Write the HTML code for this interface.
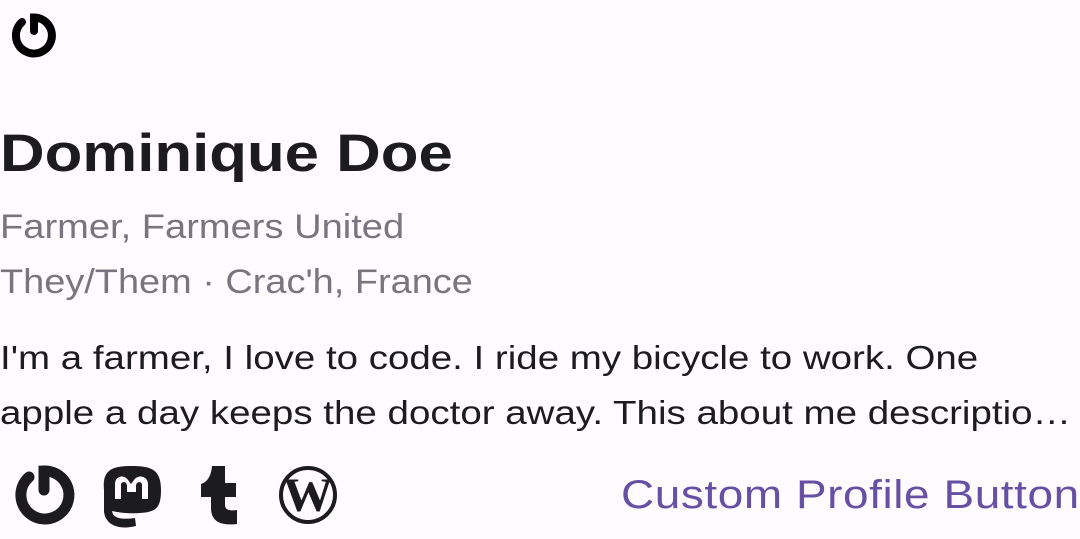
<!DOCTYPE html>
<html><head><style>
body{margin:0;width:1080px;height:539px;background:#fffbfe;font-family:"Liberation Sans",sans-serif;position:relative;overflow:hidden}
.t{position:absolute;white-space:nowrap;transform-origin:0 0}
</style></head><body>
<svg style="position:absolute;left:0;top:0" width="1080" height="539">
<g fill="none" stroke="#000" stroke-linecap="round" stroke-width="8">
<path d="M22 22 A18 18 0 1 0 34 17.5 L34 31"/>
</g>
<g fill="none" stroke="#1c1b1f" stroke-linecap="round" stroke-width="11">
<path d="M29 477 A24 24 0 1 0 44 471 L44 490"/>
</g>
<g fill="#1c1b1f">
<path d="M104 490 C102 470 112 466 132 466 C152 466 161 470 161 490 C161 508 156 512 140 513 C128 514 116 512 112 511 C113 518 120 520 135 518 L136 526 C120 530 106 526 104 512 Z"/>
<path d="M115 499 L115 484 C115 476 124 474 128 480 L131 484 L134 480 C138 474 148 476 148 484 L148 499 L142 499 L142 485 C142 481 136 481 136 486 L136 492 L127 492 L127 486 C127 481 121 481 121 485 L121 499 Z" fill="#fffbfe"/>
<path d="M212 466 L225 466 L225 483 L236 483 L236 497 L225 497 L225 505 C225 510 230 511 237 510 L237 524 C220 526 211 521 211 508 L211 497 L201 497 L201 484 C207 482 211 477 212 466 Z"/>
</g>
<circle cx="308" cy="495" r="27" fill="none" stroke="#1c1b1f" stroke-width="4"/>
<text x="308" y="511" text-anchor="middle" font-family="Liberation Serif" font-weight="bold" font-size="48" fill="#1c1b1f" transform="translate(308 0) scale(1.05 1) translate(-308 0)">W</text>
</svg>
<div class="t" style="left:0;top:123px;font-size:53px;font-weight:bold;color:#1c1b1f;transform:scaleX(1.165)">Dominique Doe</div>
<div class="t" style="left:0;top:208px;font-size:34px;color:#79747e;transform:scaleX(1.12)">Farmer, Farmers United</div>
<div class="t" style="left:0;top:263px;font-size:34px;color:#79747e;transform:scaleX(1.115)">They/Them · Crac'h, France</div>
<div class="t" style="left:0;top:339px;font-size:33px;color:#1c1b1f;transform:scaleX(1.166)">I'm a farmer, I love to code. I ride my bicycle to work. One</div>
<div class="t" style="left:0;top:394px;font-size:33px;color:#1c1b1f;transform:scaleX(1.167)">apple a day keeps the doctor away. This about me descriptio…</div>
<div class="t" style="left:621px;top:473px;font-size:40px;color:#6750a4;letter-spacing:0.5px;transform:scaleX(1.148)">Custom Profile Button</div>
</body></html>
